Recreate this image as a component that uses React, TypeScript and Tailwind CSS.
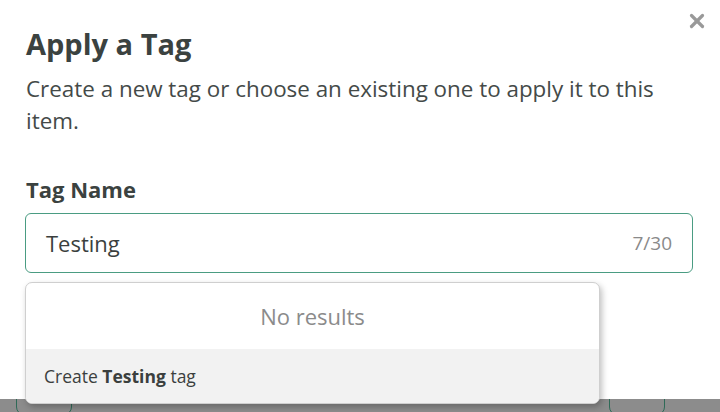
import { X } from "lucide-react"

export default function App() {
  return (
    <div
      className="relative w-[720px] h-[412px] overflow-hidden bg-[#8c8c8c]"
      style={{ fontFamily: '"Open Sans", sans-serif' }}
    >
      <div className="relative h-[399px] bg-white px-[26px] pt-[24px]">
        <button className="absolute right-[12px] top-[10px] text-[#999]">
          <X size={22} strokeWidth={3.5} />
        </button>

        <h2 className="text-[29px] font-bold leading-[40px] text-[#3b4240]">Apply a Tag</h2>
        <p className="mt-[9px] w-[667px] text-[22.4px] leading-[32px] text-[#444a48]">
          Create a new tag or choose an existing one to apply it to this item.
        </p>

        <label className="mt-[38px] block text-[22px] font-bold leading-[28px] text-[#3b4240]">Tag Name</label>
        <div className="mt-[10px] -ml-px flex h-[60px] w-[668px] items-center justify-between rounded-[6px] border border-[#4a9c82] px-[20px]">
          <span className="text-[22px] text-[#3b3f3e]">Testing</span>
          <span className="text-[19px] text-[#8a8a8a]">7/30</span>
        </div>

        <div className="absolute left-[25px] top-[282px] z-10 w-[575px] overflow-hidden rounded-[7px] border border-[#cfcfcf] bg-white shadow-[2px_3px_6px_rgba(0,0,0,0.25)]">
          <div className="flex h-[66px] items-center justify-center text-[22px] text-[#8b8b8b]">No results</div>
          <div className="flex h-[54px] items-center bg-[#f2f2f2] px-[18px] text-[17.5px] text-[#3b3f3e]">
            Create&nbsp;<b>Testing</b>&nbsp;tag
          </div>
        </div>
      </div>

      <div className="flex justify-between px-[16px] -mt-[8px]">
        <div className="h-[24px] w-[56px] rounded-[8px] border border-[#2e6a57]" />
        <div className="mr-[39px] h-[24px] w-[56px] rounded-[8px] border border-[#2e6a57]" />
      </div>
    </div>
  )
}
